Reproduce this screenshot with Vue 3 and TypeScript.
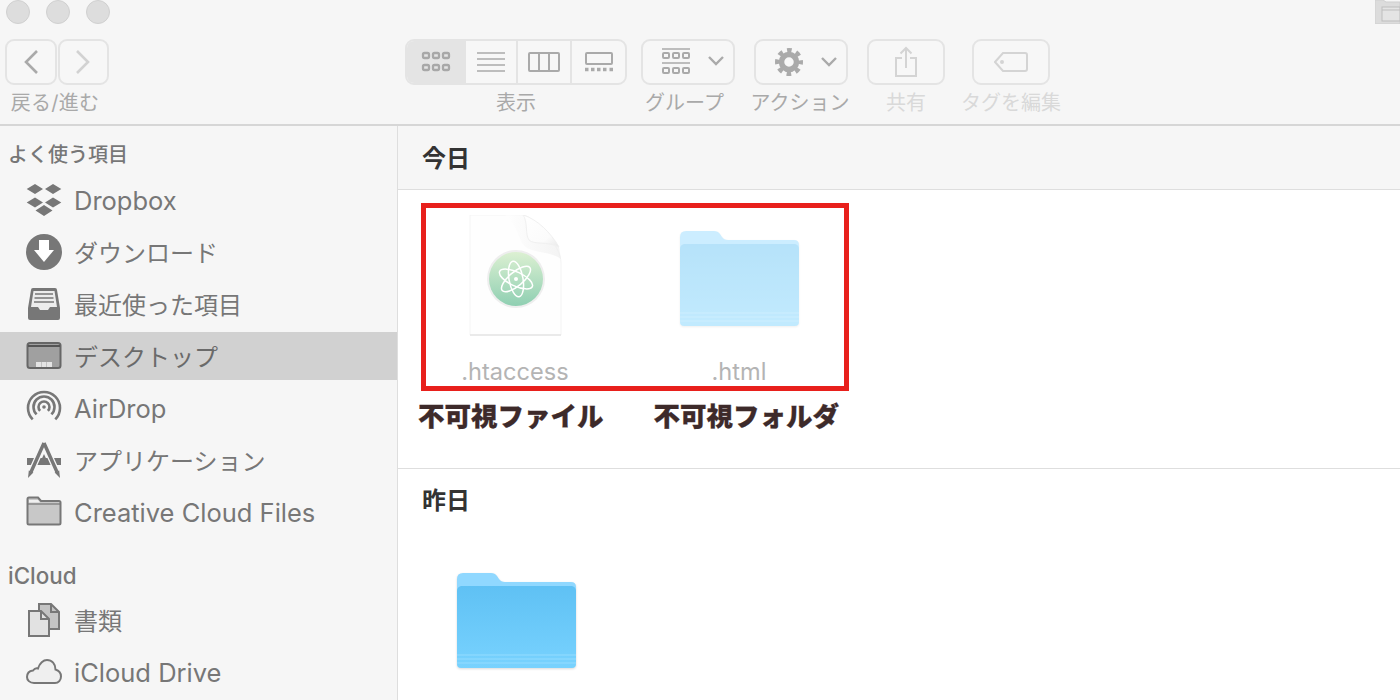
<script setup lang="ts">
interface SideItem {
    label: string
    icon: string
    latin?: boolean
    active?: boolean
}

const favorites: SideItem[] = [
    { label: 'Dropbox', icon: 'dropbox', latin: true },
    { label: 'ダウンロード', icon: 'download' },
    { label: '最近使った項目', icon: 'recents' },
    { label: 'デスクトップ', icon: 'desktop', active: true },
    { label: 'AirDrop', icon: 'airdrop', latin: true },
    { label: 'アプリケーション', icon: 'apps' },
    { label: 'Creative Cloud Files', icon: 'folder', latin: true },
]

const icloud: SideItem[] = [
    { label: '書類', icon: 'docs' },
    { label: 'iCloud Drive', icon: 'cloud', latin: true },
]

const sections = [
    { title: 'よく使う項目', latin: false, items: favorites },
    { title: 'iCloud', latin: true, items: icloud },
]
</script>

<template>
    <div class="finder">
        <header class="toolbar">
            <div class="titlebar">
                <div class="lights">
                    <span class="light"></span>
                    <span class="light"></span>
                    <span class="light"></span>
                </div>
                <svg class="proxy" width="25" height="24" viewBox="0 0 25 24">
                    <path d="M0 0h8l3 2h14v22H1a1 1 0 0 1-1-1z" fill="#dcdcdc" stroke="#cfcfcf" />
                    <rect x="7" y="7" width="18" height="14" fill="#e4e4e4" stroke="#bdbdbd" />
                    <path d="M7 10h18" stroke="#bdbdbd" />
                </svg>
            </div>

            <div class="tools">
                <div class="tool tool-nav">
                    <div class="btn-row">
                        <button class="btn nav-btn">
                            <svg width="16" height="26" viewBox="0 0 16 26"><path d="M14 2 3 13l11 11" fill="none" stroke="#aaa" stroke-width="2.6" /></svg>
                        </button>
                        <button class="btn nav-btn">
                            <svg width="16" height="26" viewBox="0 0 16 26"><path d="m2 2 11 11L2 24" fill="none" stroke="#d2d2d2" stroke-width="2.6" /></svg>
                        </button>
                    </div>
                    <span class="tool-label">戻る/進む</span>
                </div>

                <div class="tool tool-view">
                    <div class="btn segmented">
                        <div class="seg seg-on seg-icons">
                            <svg width="30" height="22" viewBox="0 0 30 22" fill="none" stroke="#a8a8a8" stroke-width="2.3">
                                <rect x="2" y="2" width="6" height="5" rx="1.5" />
                                <rect x="12" y="2" width="6" height="5" rx="1.5" />
                                <rect x="22" y="2" width="6" height="5" rx="1.5" />
                                <rect x="2" y="14" width="6" height="5" rx="1.5" />
                                <rect x="12" y="14" width="6" height="5" rx="1.5" />
                                <rect x="22" y="14" width="6" height="5" rx="1.5" />
                            </svg>
                        </div>
                        <div class="seg seg-list">
                            <svg width="28" height="22" viewBox="0 0 28 22" stroke="#aaa" stroke-width="1.6">
                                <path d="M0 2h28M0 8h28M0 14h28M0 20h28" />
                            </svg>
                        </div>
                        <div class="seg seg-cols">
                            <svg width="32" height="20" viewBox="0 0 32 20" fill="none" stroke="#aaa" stroke-width="2">
                                <rect x="1" y="1" width="30" height="18" rx="1" />
                                <path d="M11 1v18M21 1v18" />
                            </svg>
                        </div>
                        <div class="seg seg-gallery">
                            <svg width="28" height="20" viewBox="0 0 28 20" fill="none">
                                <rect x="1" y="1" width="26" height="11" rx="1" stroke="#aaa" stroke-width="2" />
                                <path d="M0 17.500h3.500M6 17.500h3.500M12 17.500h3.500M18 17.500h3.500M24.500 17.500h3.500" stroke="#aaa" stroke-width="3.500" />
                            </svg>
                        </div>
                    </div>
                    <span class="tool-label">表示</span>
                </div>

                <div class="tool tool-group">
                    <div class="btn menu-btn menu-group">
                        <svg width="62" height="28" viewBox="0 0 62 28" fill="none" stroke="#aaa">
                            <path d="M0 1h28M0 15h28" stroke-width="1.600" />
                            <rect x="1" y="5" width="6" height="5" rx="1" stroke-width="2" />
                            <rect x="11" y="5" width="6" height="5" rx="1" stroke-width="2" />
                            <rect x="21" y="5" width="6" height="5" rx="1" stroke-width="2" />
                            <rect x="1" y="20" width="6" height="5" rx="1" stroke-width="2" />
                            <rect x="11" y="20" width="6" height="5" rx="1" stroke-width="2" />
                            <rect x="21" y="20" width="6" height="5" rx="1" stroke-width="2" />
                            <path d="m47 9 7 7 7-7" stroke-width="2.400" />
                        </svg>
                    </div>
                    <span class="tool-label">グループ</span>
                </div>

                <div class="tool tool-action">
                    <div class="btn menu-btn menu-action">
                        <svg width="62" height="28" viewBox="0 0 62 28" fill="none" stroke="#aaa">
                            <circle cx="14" cy="14" r="7.500" stroke-width="5.500" />
                            <circle cx="14" cy="14" r="11.500" stroke-width="5" stroke-dasharray="4.500 4.530" stroke-dashoffset="2.250" />
                            <path d="m47 10 7 7 7-7" stroke-width="2.400" />
                        </svg>
                    </div>
                    <span class="tool-label">アクション</span>
                </div>

                <div class="tool tool-share">
                    <div class="btn">
                        <svg width="24" height="32" viewBox="0 0 24 32" fill="none" stroke="#d4d4d4" stroke-width="2">
                            <path d="M8 12H2v18h20V12h-6" />
                            <path d="M12 22V2M6.500 7.500 12 2l5.500 5.500" />
                        </svg>
                    </div>
                    <span class="tool-label tool-label-off">共有</span>
                </div>

                <div class="tool tool-tag">
                    <div class="btn">
                        <svg width="34" height="22" viewBox="0 0 34 22" fill="none" stroke="#d4d4d4" stroke-width="2">
                            <path d="M9 2h22a2 2 0 0 1 2 2v14a2 2 0 0 1-2 2H9l-8-9z" />
                            <circle cx="8" cy="11" r="1" />
                        </svg>
                    </div>
                    <span class="tool-label tool-label-off">タグを編集</span>
                </div>
            </div>
        </header>

        <div class="body">
            <aside class="sidebar">
                <section v-for="section in sections" :key="section.title" class="side-section">
                    <h3 class="side-title" :class="{ 'side-title-latin': section.latin }">{{ section.title }}</h3>
                    <div
                        v-for="item in section.items"
                        :key="item.label"
                        class="side-row"
                        :class="{ 'side-row-on': item.active }"
                    >
                        <svg class="side-icon" width="36" height="36" viewBox="0 0 36 36">
                            <g v-if="item.icon === 'dropbox'" fill="#777">
                                <path d="M.7 7 9 2l8 5-8 5zM19 7l8-5 8.300 5-8.300 5zM.7 20.500l8.300-5 8 5-8 5zM19 20.500l8-5 8.300 5-8.300 5zM9.500 28.500 18 23l8.500 5.500L18 34z" />
                            </g>
                            <g v-else-if="item.icon === 'download'">
                                <circle cx="18" cy="18" r="18" fill="#777" />
                                <path d="M13 6h10v10h5L18 28 8 16h5z" fill="#fff" />
                            </g>
                            <g v-else-if="item.icon === 'recents'">
                                <path d="M7 2h22a2 2 0 0 1 2 2l3 18v10a2 2 0 0 1-2 2H4a2 2 0 0 1-2-2V22L5 4a2 2 0 0 1 2-2z" fill="#777" />
                                <path d="M7.500 5h21L31 21h-7l-2 3h-8l-2-3H5z" fill="#ececec" />
                                <path d="M9 8h18M8.500 12h19M8 16h20" stroke="#777" stroke-width="1.600" />
                            </g>
                            <g v-else-if="item.icon === 'desktop'">
                                <rect x="1.500" y="5" width="33" height="25" rx="2.500" fill="#a0a0a0" stroke="#666" stroke-width="2" />
                                <path d="M2 8h32" stroke="#555" stroke-width="2" />
                                <path d="M10 29v-5h5v5zM15.500 29v-5h5v5zM21 29v-5h5v5z" fill="#e4e4e4" />
                            </g>
                            <g v-else-if="item.icon === 'airdrop'" fill="none" stroke="#777" stroke-width="2.600">
                                <path d="M6.700 29.300a16 16 0 1 1 22.600 0" />
                                <path d="M10.600 24.400a10.500 10.500 0 1 1 14.800 0" />
                                <path d="M14.100 20.900a5.500 5.500 0 1 1 7.800 0" />
                                <circle cx="18" cy="17" r="1.800" fill="#777" stroke="none" />
                            </g>
                            <g v-else-if="item.icon === 'apps'">
                                <path d="M1 16h34v7H1z" fill="#777" />
                                <path d="M18 1 5 30M18 1l13 29" fill="none" stroke="#f6f6f6" stroke-width="6" />
                                <path d="M18 1 5 30M18 1l13 29" fill="none" stroke="#777" stroke-width="3.400" />
                                <path d="M13 23l5-11 5 11z" fill="#777" />
                                <path d="M2 36l.8-7.500 4.600 2zM34 36l-.8-7.500-4.600 2z" fill="#777" />
                            </g>
                            <g v-else-if="item.icon === 'folder'">
                                <path d="M1.500 29V5a1.500 1.500 0 0 1 1.500-1.500h9L15 7h18a1.500 1.500 0 0 1 1.500 1.500V29a1.500 1.500 0 0 1-1.500 1.500H3A1.500 1.500 0 0 1 1.500 29z" fill="#c8c8c8" stroke="#777" stroke-width="2" />
                                <path d="M2 10h32" stroke="#777" stroke-width="1.200" />
                                <path d="M3 6h9l2 2.500H3z" fill="#f0f0f0" />
                            </g>
                            <g v-else-if="item.icon === 'docs'" stroke="#777" stroke-width="2">
                                <path d="M13 2h12l8 8v17H13z" fill="#c4c4c4" />
                                <path d="M25 2v8h8" fill="none" />
                                <path d="M3 9h12l8 8v17H3z" fill="#e2e2e2" />
                                <path d="M15 9v8h8" fill="none" />
                            </g>
                            <g v-else-if="item.icon === 'cloud'">
                                <path d="M8 29C3.500 29 1 26 1 23c0-3.500 2.500-6 6-6.500 1.500-2 3.500-2.500 5-2C13.500 9 17.500 6 21 6c5 0 8.500 4 8.500 9.500 3.500 1 5.500 4 5.500 7 0 3.500-2.500 6.500-6 6.500z" fill="#efefef" stroke="#777" stroke-width="2" />
                            </g>
                        </svg>
                        <span class="side-label" :class="{ 'side-label-latin': item.latin }">{{ item.label }}</span>
                    </div>
                </section>
            </aside>

            <main class="main">
                <h2 class="day day-head">今日</h2>
                <section class="today">
                    <div class="files">
                        <div class="file">
                            <svg class="doc" width="94" height="124" viewBox="0 0 94 124">
                                <defs>
                                    <linearGradient id="atom-bg" x1="0" y1="0" x2="0" y2="1">
                                        <stop offset="0" stop-color="#dcf0d2" />
                                        <stop offset="1" stop-color="#8fcfb2" />
                                    </linearGradient>
                                    <linearGradient id="page-fold" x1="0" y1="0" x2="1" y2="1">
                                        <stop offset="0" stop-color="#ffffff" />
                                        <stop offset="0.700" stop-color="#fbfbfb" />
                                        <stop offset="1" stop-color="#e9e9e9" />
                                    </linearGradient>
                                    <linearGradient id="page-shade" x1="1" y1="0" x2="0" y2="0">
                                        <stop offset="0" stop-color="#ececec" />
                                        <stop offset="1" stop-color="#ffffff" />
                                    </linearGradient>
                                </defs>
                                <path d="M1 0h54c12 4 37 30 37 48v72H1z" fill="#fefefe" stroke="#f4f4f4" />
                                <path d="M36 0h18c5 6 2 20 6 25 5 5 18 1 30 7l2 12C78 34 58 40 52 26 48 16 44 6 36 0z" fill="url(#page-shade)" opacity="0.600" />
                                <path d="M1 120h91" stroke="#e4e4e4" stroke-width="1.500" />
                                <path d="M54 0c5 6 2 20 6 25 5 5 18 1 30 7C82 18 68 4 54 0z" fill="url(#page-fold)" stroke="#f0f0f0" />
                                <circle cx="47" cy="64" r="29" fill="#eeeeee" />
                                <circle cx="47" cy="64" r="27" fill="url(#atom-bg)" />
                                <g fill="none" stroke="#fff" stroke-width="1.500">
                                    <ellipse cx="47" cy="64" rx="18" ry="7" transform="rotate(25 47 64)" />
                                    <ellipse cx="47" cy="64" rx="18" ry="7" transform="rotate(-40 47 64)" />
                                    <ellipse cx="47" cy="64" rx="18" ry="7" transform="rotate(80 47 64)" />
                                </g>
                                <circle cx="47" cy="64" r="2" fill="#fff" />
                            </svg>
                            <span class="file-name">.htaccess</span>
                        </div>
                        <div class="file">
                            <svg class="pale-folder" width="120" height="96" viewBox="0 0 120 96">
                                <defs>
                                    <linearGradient id="folder-body" x1="0" y1="0" x2="0" y2="1">
                                        <stop offset="0" stop-color="#5fc1f4" />
                                        <stop offset="1" stop-color="#78d2fe" />
                                    </linearGradient>
                                </defs>
                                <path d="M0 6q0-6 6-6h28q4 0 6 3l2 3q2 3 6 3h66q5 0 5 5v20H0z" fill="#90d8ff" />
                                <path d="M0 18q0-4 4-5h111q4 1 4 5v73q0 4-4 4H4q-4 0-4-4z" fill="url(#folder-body)" />
                                <path d="M0 82h119M0 86h119M0 90h119" stroke="#94dcff" stroke-width="1" />
                            </svg>
                            <span class="file-name">.html</span>
                        </div>
                    </div>
                    <div class="captions">
                        <span class="caption">不可視ファイル</span>
                        <span class="caption">不可視フォルダ</span>
                    </div>
                </section>
                <h2 class="day">昨日</h2>
                <section class="yesterday">
                    <svg class="folder" width="120" height="96" viewBox="0 0 120 96">
                        <path d="M0 6q0-6 6-6h28q4 0 6 3l2 3q2 3 6 3h66q5 0 5 5v20H0z" fill="#90d8ff" />
                        <path d="M0 18q0-4 4-5h111q4 1 4 5v73q0 4-4 4H4q-4 0-4-4z" fill="url(#folder-body)" />
                        <path d="M0 82h119M0 86h119M0 90h119" stroke="#94dcff" stroke-width="1" />
                    </svg>
                </section>

                <div class="red-frame"></div>
            </main>
        </div>
    </div>
</template>

<style scoped>
.finder {
    width: 1400px;
    height: 700px;
    overflow: hidden;
    display: flex;
    flex-direction: column;
    background: #fff;
    font-family: Inter, "Noto Sans CJK JP", sans-serif;
}

.toolbar {
    height: 126px;
    box-sizing: border-box;
    flex: none;
    background: #f6f6f6;
    border-bottom: 2px solid #d6d6d6;
}

.titlebar {
    height: 24px;
    margin-bottom: 15px;
    display: flex;
    justify-content: space-between;
}

.lights {
    display: flex;
    gap: 16px;
    padding-left: 6px;
}

.light {
    width: 24px;
    height: 24px;
    box-sizing: border-box;
    border-radius: 50%;
    background: #dddddd;
    border: 1px solid #d0d0d0;
}

.tools {
    display: flex;
    padding-left: 5px;
}

.tool {
    display: flex;
    flex-direction: column;
    align-items: center;
}

.tool-nav { width: 104px; }
.tool-view { width: 222px; margin-left: 296px; }
.tool-group { width: 94px; margin-left: 14px; }
.tool-action { width: 94px; margin-left: 19px; }
.tool-share { width: 78px; margin-left: 19px; }
.tool-tag { width: 78px; margin-left: 27px; }

.btn-row {
    display: flex;
    gap: 1px;
    width: 100%;
}

.btn {
    width: 100%;
    height: 46px;
    box-sizing: border-box;
    padding: 0;
    display: flex;
    align-items: center;
    justify-content: center;
    background: #f7f7f7;
    border: 2px solid #e4e4e4;
    border-radius: 9px;
}

.nav-btn {
    flex: 1;
    min-width: 0;
}

.segmented {
    overflow: hidden;
    align-items: stretch;
    justify-content: flex-start;
}

.seg {
    box-sizing: border-box;
    display: flex;
    align-items: center;
    justify-content: center;
    border-left: 2px solid #e4e4e4;
}

.seg-on {
    background: #e4e4e4;
    border-left: 0;
}

.seg-icons { width: 57px; }
.seg-list { width: 52px; }
.seg-cols { width: 54px; }
.seg-gallery { flex: 1; }

.menu-btn {
    justify-content: flex-start;
}

.menu-group { padding-left: 19px; }
.menu-action { padding-left: 19px; }

.tool-label {
    margin-top: 5px;
    font-size: 20px;
    line-height: 26px;
    color: #a9a9a9;
    white-space: nowrap;
}

.tool-nav .tool-label {
    margin-right: 4px;
    letter-spacing: 0.3px;
}

.tool-group .tool-label {
    margin-right: 7px;
}

.tool-action .tool-label {
    margin-right: 2px;
}

.tool-label-off {
    color: #d9d9d9;
}

.body {
    flex: 1;
    display: flex;
    min-height: 0;
}

.sidebar {
    width: 398px;
    flex: none;
    box-sizing: border-box;
    padding-top: 14px;
    background: #f6f6f6;
    border-right: 1px solid #dedede;
}

.side-section {
    display: flex;
    flex-direction: column;
}

.side-section + .side-section {
    margin-top: 24px;
}

.side-title {
    margin: 0 0 6px;
    height: 28px;
    padding-left: 8px;
    font-size: 20px;
    line-height: 30px;
    font-weight: 500;
    color: #777;
}

.side-title-latin {
    margin-bottom: 4px;
    font-size: 22.400px;
    line-height: 28px;
}

.side-row {
    height: 48px;
    margin: 2px 0;
    padding-left: 26px;
    display: flex;
    align-items: center;
    gap: 12px;
}

.side-row-on {
    background: #d1d1d1;
}

.side-icon {
    flex: none;
}

.side-label {
    padding-bottom: 2px;
    font-size: 24px;
    color: #777;
    white-space: nowrap;
}

.side-label-latin {
    padding-bottom: 0;
    font-size: 25.500px;
}

.side-row-on .side-label {
    color: #6a6a6a;
}

.main {
    flex: 1;
    position: relative;
    min-width: 0;
}

.day {
    margin: 0;
    height: 63px;
    box-sizing: border-box;
    padding-left: 24px;
    font-size: 24px;
    line-height: 63px;
    font-weight: 700;
    color: #333;
}

.day-head {
    height: 64px;
    line-height: 65px;
    background: #f6f6f6;
    border-bottom: 1px solid #dedede;
}

.today {
    padding-top: 25px;
    height: 279px;
    box-sizing: border-box;
    border-bottom: 1px solid #dedede;
}

.files {
    display: flex;
    padding-left: 6px;
}

.file {
    width: 224px;
    display: flex;
    flex-direction: column;
    align-items: center;
}

.doc {
    height: 124px;
}

.pale-folder {
    margin: 16px 0 12px;
    opacity: 0.45;
    filter: drop-shadow(0 1px 1px rgba(0, 0, 0, 0.15));
}

.file-name {
    margin-top: 18px;
    margin-right: 2px;
    font-size: 23.600px;
    line-height: 30px;
    color: #b4b4b4;
}

.captions {
    display: flex;
    gap: 50px;
    padding-left: 20px;
    margin-top: 12px;
}

.caption {
    font-size: 26.500px;
    line-height: 34px;
    font-weight: 900;
    color: #3d2a2a;
    white-space: nowrap;
    -webkit-text-stroke: 0.3px #3d2a2a;
}

.yesterday {
    padding: 41px 0 0 59px;
}

.folder {
    display: block;
    filter: drop-shadow(0 1px 1px rgba(0, 0, 0, 0.15));
}

.red-frame {
    position: absolute;
    left: 23px;
    top: 77px;
    width: 428px;
    height: 188px;
    box-sizing: border-box;
    border: 5px solid #e8201c;
    pointer-events: none;
}
</style>
